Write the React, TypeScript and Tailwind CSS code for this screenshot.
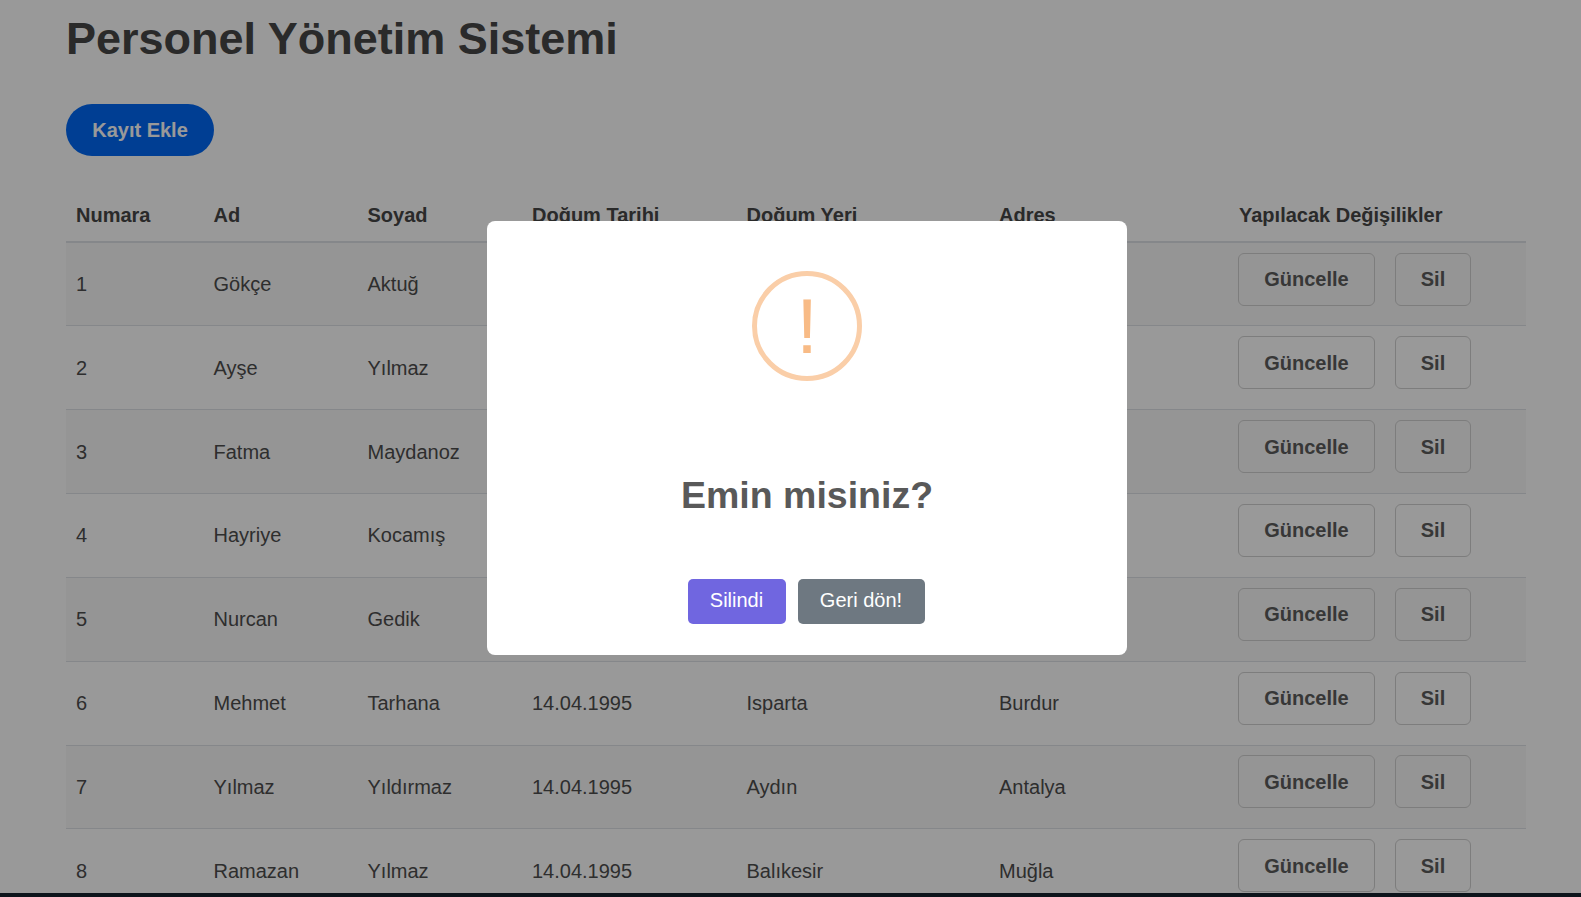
// rows 1-5 sit behind the dialog, so their last columns are left empty
const rows = [
  ["1", "Gökçe", "Aktuğ", "", "", ""],
  ["2", "Ayşe", "Yılmaz", "", "", ""],
  ["3", "Fatma", "Maydanoz", "", "", ""],
  ["4", "Hayriye", "Kocamış", "", "", ""],
  ["5", "Nurcan", "Gedik", "", "", ""],
  ["6", "Mehmet", "Tarhana", "14.04.1995", "Isparta", "Burdur"],
  ["7", "Yılmaz", "Yıldırmaz", "14.04.1995", "Aydın", "Antalya"],
  ["8", "Ramazan", "Yılmaz", "14.04.1995", "Balıkesir", "Muğla"],
];

const headers = ["Numara", "Ad", "Soyad", "Doğum Tarihi", "Doğum Yeri", "Adres", "Yapılacak Değişilikler"];

export default function App() {
  return (
    <div className="relative h-[897px] overflow-hidden bg-white font-['Liberation_Sans',Arial,sans-serif] text-[20px] text-[#4d4d4d]">
      <div className="h-[893px] overflow-hidden px-[66px]">
        <h1 className="mt-[12px] text-[45px] leading-[54px] font-bold text-[#464646]">Personel Yönetim Sistemi</h1>
        <button className="mt-[38px] block h-[52px] w-[148px] rounded-[26px] bg-[#0068f5] text-center font-bold text-white">
          Kayıt Ekle
        </button>

        <table className="mt-[30px] w-[1460px] table-fixed border-collapse text-left">
          <colgroup>
            <col className="w-[137.5px]" />
            <col className="w-[154px]" />
            <col className="w-[164.5px]" />
            <col className="w-[214.5px]" />
            <col className="w-[252.5px]" />
            <col className="w-[240px]" />
            <col />
          </colgroup>
          <thead>
            <tr className="h-[56px] border-b-2 border-[#dee2e6]">
              {headers.map((h) => (
                <th key={h} className="px-[10px] pt-[2px] align-middle font-bold text-[#464646]">{h}</th>
              ))}
            </tr>
          </thead>
          <tbody>
            {rows.map((row, i) => (
              <tr key={row[0]} className={`h-[83.85px] border-b border-[#dee2e6] ${i % 2 === 0 ? "bg-[#f9f9f9]" : ""}`}>
                {row.map((cell, j) => (
                  <td key={j} className="px-[10px] align-middle">{cell}</td>
                ))}
                <td className="px-[10px] align-middle">
                  <div className="-mt-[10px] -ml-px flex gap-[20px]">
                    <button className="h-[53px] w-[137px] rounded-[6px] border border-[#d0d0d0] font-bold text-[#5c5c5c]">Güncelle</button>
                    <button className="h-[53px] w-[76px] rounded-[6px] border border-[#d0d0d0] font-bold text-[#5c5c5c]">Sil</button>
                  </div>
                </td>
              </tr>
            ))}
          </tbody>
        </table>
      </div>
      <div className="h-[4px] bg-[#16222e]" />

      {/* Overlay + confirm dialog */}
      <div className="absolute inset-0 bg-black/40">
        <div className="absolute top-[221px] left-[487px] flex h-[434px] w-[640px] flex-col items-center rounded-[8px] bg-white">
          <div className="mt-[50px] flex h-[110px] w-[110px] items-center justify-center rounded-full border-[5px] border-[#facea8] text-[78px] leading-none text-[#f8bb86]">
            !
          </div>
          <h2 className="mt-[92px] text-[37.5px] leading-[45px] font-bold text-[#595959]">Emin misiniz?</h2>
          <div className="mt-[61px] -ml-[2px] flex gap-[12px]">
            <button className="h-[45px] w-[98px] rounded-[5px] bg-[#7066e0] pb-[3px] text-white">Silindi</button>
            <button className="h-[45px] w-[127px] rounded-[5px] bg-[#6e7881] pb-[3px] text-white">Geri dön!</button>
          </div>
        </div>
      </div>
    </div>
  );
}
